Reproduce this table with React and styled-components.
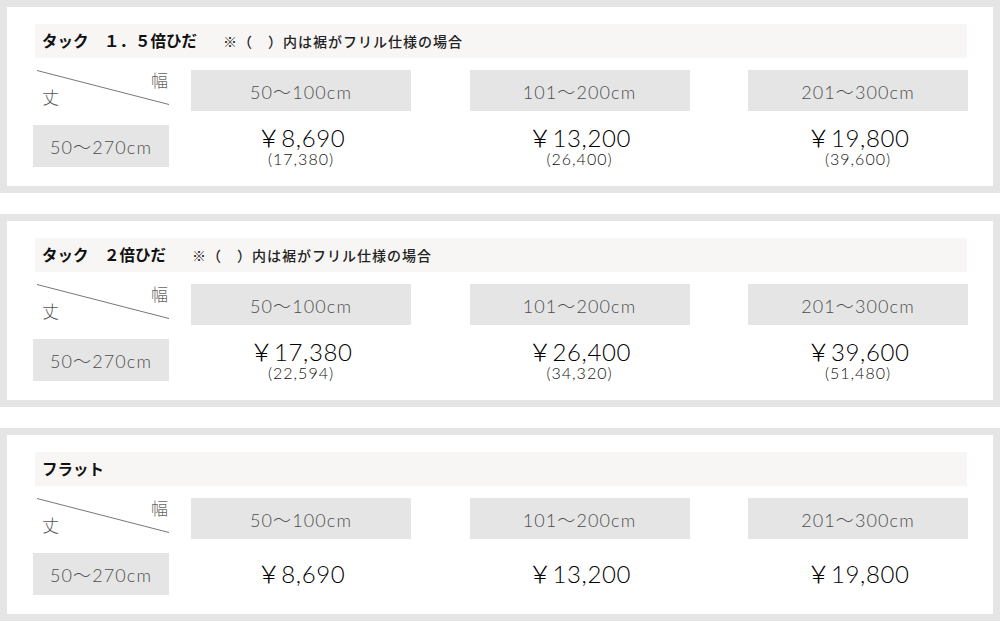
import React from 'react'
import styled, { createGlobalStyle } from 'styled-components'

const GlobalStyle = createGlobalStyle`
  html, body {
    margin: 0;
    padding: 0;
    background: #fff;
  }
  body {
    font-family: Lato, 'Noto Sans CJK JP', sans-serif;
    color: #222;
  }
`

const widths = ['50〜100cm', '101〜200cm', '201〜300cm']

const sections = [
  {
    title: 'タック　１．５倍ひだ',
    note: true,
    prices: [['8,690', '17,380'], ['13,200', '26,400'], ['19,800', '39,600']]
  },
  {
    title: 'タック　２倍ひだ',
    note: true,
    prices: [['17,380', '22,594'], ['26,400', '34,320'], ['39,600', '51,480']]
  },
  {
    title: 'フラット',
    note: false,
    prices: [['8,690'], ['13,200'], ['19,800']]
  }
]

export default function App () {
  return (
    <Page>
      <GlobalStyle />
      {sections.map(section => (
        <Panel key={section.title}>
          <Heading>
            <Title>{section.title}</Title>
            {section.note && <Note>※（　）内は裾がフリル仕様の場合</Note>}
          </Heading>
          <Table>
            <Corner>
              <CornerLine viewBox='0 0 132 35' preserveAspectRatio='none'>
                <line x1='0' y1='0.5' x2='132' y2='34.5' stroke='#777' strokeWidth='1' vectorEffect='non-scaling-stroke' />
              </CornerLine>
              <Haba>幅</Haba>
              <Take>丈</Take>
            </Corner>
            {widths.map(w => (
              <WidthCell key={w}>{w}</WidthCell>
            ))}
            <LengthCell>50〜270cm</LengthCell>
            {section.prices.map(([main, frill]) => (
              <PriceCell key={main}>
                <Price>￥{main}</Price>
                {frill && <Frill>({frill})</Frill>}
              </PriceCell>
            ))}
          </Table>
        </Panel>
      ))}
    </Page>
  )
}

const Page = styled.div`
  display: flex;
  flex-direction: column;
  gap: 21px;
  width: 1000px;
`

const Panel = styled.section`
  border: 7px solid #e5e5e5;
  background: #fff;
  padding: 17px 26px 19px 26px;
  box-sizing: content-box;
  height: 143px;
`

const Heading = styled.div`
  display: flex;
  align-items: center;
  height: 34px;
  margin-left: 2px;
  padding-left: 7px;
  background: #f7f6f4;
`

const Title = styled.h2`
  margin: 0 26px 0 0;
  font-family: 'Noto Sans CJK JP', sans-serif;
  font-size: 15.5px;
  font-weight: 700;
  color: #111;
  line-height: 1;
`

const Note = styled.span`
  font-family: 'Noto Sans CJK JP', sans-serif;
  font-size: 14px;
  font-weight: 500;
  letter-spacing: 1px;
  color: #222;
  line-height: 1;
`

const Table = styled.div`
  display: grid;
  grid-template-columns: 158px 278.5px 278.5px 219px;
  grid-template-rows: 41px 42px;
  row-gap: 14px;
  margin-top: 12px;
`

const Corner = styled.div`
  position: relative;
  width: 134px;
  margin-left: 2px;
`

const CornerLine = styled.svg`
  position: absolute;
  left: 2px;
  top: 0;
  width: 132px;
  height: 35px;
`

const Haba = styled.span`
  position: absolute;
  right: 1px;
  top: 0;
  font-family: 'Noto Sans CJK JP', sans-serif;
  font-size: 17px;
  font-weight: 300;
  color: #666;
  line-height: 20px;
`

const Take = styled.span`
  position: absolute;
  left: 7px;
  top: 17px;
  font-family: 'Noto Sans CJK JP', sans-serif;
  font-size: 17px;
  font-weight: 300;
  color: #555;
  line-height: 20px;
`

const GrayBox = styled.div`
  display: flex;
  align-items: center;
  justify-content: center;
  background: #e5e5e5;
  color: #4e4e4e;
  font-size: 18px;
  font-weight: 300;
  letter-spacing: 1.1px;
`

const WidthCell = styled(GrayBox)`
  width: 220px;
`

const LengthCell = styled(GrayBox)`
  width: 136px;
`

const PriceCell = styled.div`
  width: 220px;
  display: flex;
  flex-direction: column;
  align-items: center;
  justify-content: center;
`

const Price = styled.div`
  font-size: 24px;
  font-weight: 300;
  letter-spacing: 0.6px;
  line-height: 26px;
  color: #000;
`

const Frill = styled.div`
  font-size: 16px;
  font-weight: 300;
  letter-spacing: 1px;
  line-height: 16px;
  color: #111;
`
